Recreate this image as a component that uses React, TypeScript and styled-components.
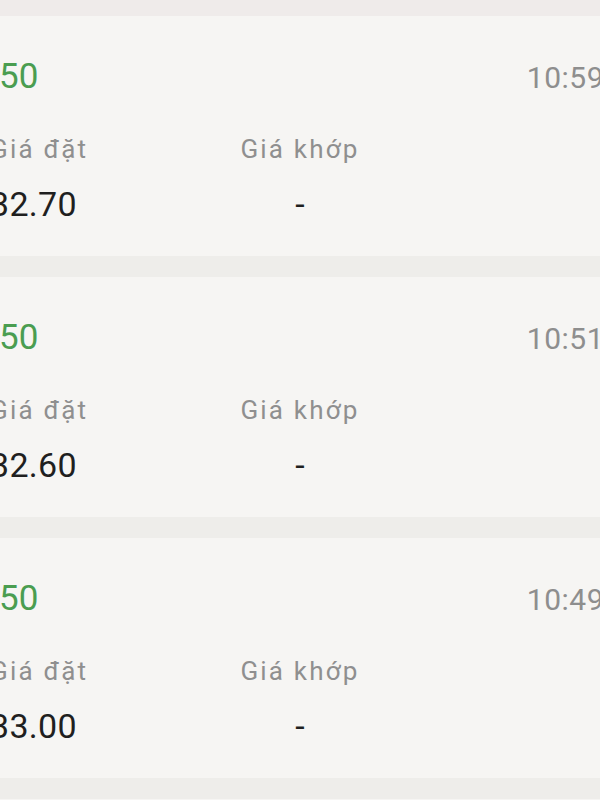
import React from "react";
import styled, { createGlobalStyle } from "styled-components";

const GlobalStyle = createGlobalStyle`
  html, body {
    margin: 0;
    padding: 0;
    background: #eeedea;
    overflow: hidden;
    font-family: Roboto, "Noto Sans", "Liberation Sans", sans-serif;
  }
`

const Page = styled.div`
  width: 600px;
  height: 800px;
  overflow: hidden;
  background: #eeedea;
  border-top: 16px solid #efebea;
  box-sizing: border-box;
`

const List = styled.div`
  margin: 0 -40px;
  display: flex;
  flex-direction: column;
  gap: 21px;
`

const Card = styled.div`
  background: #f6f5f3;
  padding: 40px 30px 32px 30px;
`

const Header = styled.div`
  display: flex;
  justify-content: space-between;
  align-items: baseline;
  height: 40px;
`

const Volume = styled.span`
  padding-left: 9px;
  font-size: 35px;
  line-height: 41px;
  color: #4a9d50;
`

const Time = styled.span`
  margin-right: 6px;
  font-size: 30px;
  line-height: 42px;
  color: #8e8e8e;
  letter-spacing: 0.5px;
`

const Grid = styled.div`
  display: grid;
  grid-template-columns: 1fr 1fr 1fr;
  margin-top: 37px;
  row-gap: 19px;
`

const Label = styled.div<{ $align: string }>`
  font-size: 26px;
  line-height: 32px;
  letter-spacing: 2.2px;
  color: #8f8f8f;
  text-align: ${(p) => p.$align};
`

const Value = styled.div<{ $align: string }>`
  font-size: 34px;
  line-height: 40px;
  letter-spacing: 0.3px;
  color: #1f1f1f;
  text-align: ${(p) => p.$align};
`

type Order = {
  volume: string;
  time: string;
  price: string;
  matched: string;
}

const orders: Order[] = [
  { volume: "50", time: "10:59", price: "32.70", matched: "-" },
  { volume: "50", time: "10:51", price: "32.60", matched: "-" },
  { volume: "50", time: "10:49", price: "33.00", matched: "-" },
  { volume: "50", time: "10:45", price: "33.10", matched: "-" },
];

const OrderCard: React.FC<{ order: Order }> = ({ order }) => (
  <Card>
    <Header>
      <Volume>{order.volume}</Volume>
      <Time>{order.time}</Time>
    </Header>
    <Grid>
      <Label $align="left">Giá đặt</Label>
      <Label $align="center">Giá khớp</Label>
      <Label $align="right" />
      <Value $align="left">{order.price}</Value>
      <Value $align="center">{order.matched}</Value>
      <Value $align="right" />
    </Grid>
  </Card>
)

export default function App() {
  return (
    <>
      <GlobalStyle />
      <Page>
        <List>
          {orders.map((o, i) => (
            <OrderCard key={i} order={o} />
          ))}
        </List>
      </Page>
    </>
  );
}
